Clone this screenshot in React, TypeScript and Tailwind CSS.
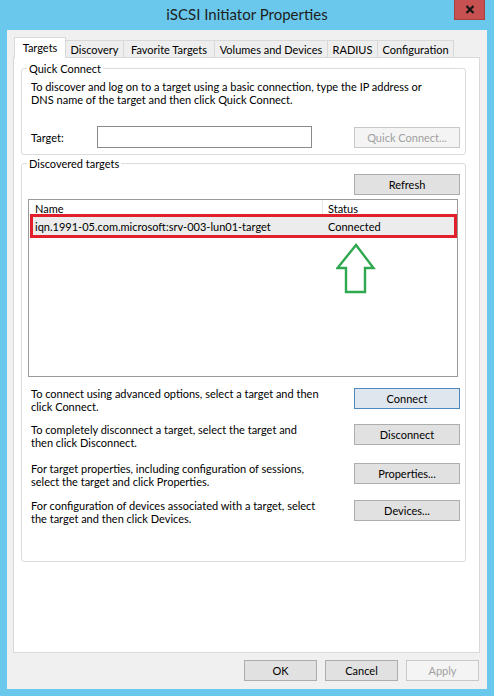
import type { ReactNode } from 'react';

type BtnProps = {
  children: ReactNode;
  disabled?: boolean;
  focused?: boolean;
  className?: string;
};

function Btn({ children, disabled = false, focused = false, className = '' }: BtnProps) {
  let look = 'border-[#adadad] bg-[#e1e1e1] text-black';
  if (disabled) look = 'border-[#c8c8c8] bg-[#f4f4f4] text-[#a0a0a0]';
  if (focused) look = 'border-[#4f88c0] bg-[#dfe6ed] text-black';
  return (
    <button
      type="button"
      className={`flex h-[21px] items-center justify-center border ${look} ${className}`}
    >
      {children}
    </button>
  );
}

const tabs = [
  { label: 'Targets', w: 'w-[52px]' },
  { label: 'Discovery', w: 'w-[59px]' },
  { label: 'Favorite Targets', w: 'w-[92px]' },
  { label: 'Volumes and Devices', w: 'w-[114px]' },
  { label: 'RADIUS', w: 'w-[51px]' },
  { label: 'Configuration', w: 'w-[77px]' },
];

const actions = [
  {
    lines: ['To connect using advanced options, select a target and then', 'click Connect.'],
    button: 'Connect',
    gap: 'mt-[10px]',
    focused: true,
  },
  {
    lines: ['To completely disconnect a target, select the target and', 'then click Disconnect.'],
    button: 'Disconnect',
    gap: 'mt-[10px]',
    focused: false,
  },
  {
    lines: ['For target properties, including configuration of sessions,', 'select the target and click Properties.'],
    button: 'Properties...',
    gap: 'mt-[13px]',
    focused: false,
  },
  {
    lines: ['For configuration of devices associated with a target, select', 'the target and then click Devices.'],
    button: 'Devices...',
    gap: 'mt-[11px]',
    focused: false,
  },
];

export default function App() {
  return (
    <div className="flex h-[696px] w-[494px] flex-col bg-[#69c8ec] font-['Lato',sans-serif] text-[11px] leading-[13px] text-black">
      {/* Title bar */}
      <div className="relative flex h-[30px] items-center justify-center">
        <span className="pb-[2px] text-[15px] leading-[18px] text-[#1e1e1e]">iSCSI Initiator Properties</span>
        <div className="absolute right-[9px] top-0 flex h-[20px] w-[31px] items-center justify-center border border-t-0 border-[#a8403f] bg-[#c75050]">
          <svg width="10" height="9" viewBox="0 0 10 9">
            <path d="M1.5 1 L8.5 8 M8.5 1 L1.5 8" stroke="#151515" strokeWidth="2.2" />
          </svg>
        </div>
      </div>

      {/* Dialog body */}
      <div className="mx-[7px] flex h-[659px] w-[480px] flex-col bg-[#f0f0f0] pl-[6px] pr-[7px] pt-[7px]">
        {/* Tabs */}
        <div className="relative z-10 -mb-px flex h-[21px] items-end pl-[1px]">
          {tabs.map((t, i) =>
            i === 0 ? (
              <div
                key={t.label}
                className={`relative z-10 flex h-[21px] ${t.w} items-start justify-center border border-b-0 border-[#d9d9d9] bg-white pt-[3px]`}
              >
                {t.label}
              </div>
            ) : (
              <div
                key={t.label}
                className={`-ml-px flex h-[18px] ${t.w} items-start justify-center border border-[#d9d9d9] bg-[#eeeeee] pt-[2px]`}
              >
                {t.label}
              </div>
            ),
          )}
        </div>

        {/* Tab panel */}
        <div className="flex h-[596px] flex-col border border-[#d9d9d9] bg-white pl-[7px] pr-[13px]">
          {/* Quick Connect */}
          <fieldset className="mt-[4px] rounded-[3px] border border-[#dcdcdc] pb-[6px] pl-[9px] pr-[5px]">
            <legend className="-ml-[4px] px-[2px]">Quick Connect</legend>
            <p className="mt-[5px]">
              To discover and log on to a target using a basic connection, type the IP address or
              <br />
              DNS name of the target and then click Quick Connect.
            </p>
            <div className="mt-[20px] flex items-center">
              <span className="w-[66px]">Target:</span>
              <div className="h-[22px] w-[215px] border border-[#8a8a8a] bg-white" />
              <Btn disabled className="ml-auto w-[106px]">
                Quick Connect...
              </Btn>
            </div>
          </fieldset>

          {/* Discovered targets */}
          <fieldset className="mt-[2px] rounded-[3px] border border-[#dcdcdc] pb-[36px] pl-[6px] pr-[5px]">
            <legend className="-ml-[1px] px-[2px]">Discovered targets</legend>
            <div className="mt-[4px] flex justify-end">
              <Btn className="w-[106px]">Refresh</Btn>
            </div>

            <div className="mt-[4px] h-[178px] w-[430px] border border-[#9a9a9a] bg-white">
              <div className="flex h-[14px] leading-[12px]">
                <div className="w-[294px] border-r border-[#e5e5e5] pl-[6px] pt-[3px]">Name</div>
                <div className="pl-[5px] pt-[3px]">Status</div>
              </div>
              <div className="ml-[1px] flex h-[24px] items-center border-[3px] border-[#e2202c] bg-[#ececec]">
                <div className="w-[295px] pl-[2px]">iqn.1991-05.com.microsoft:srv-003-lun01-target</div>
                <div>Connected</div>
              </div>
              <svg className="ml-[307px] mt-[5px]" width="40" height="52" viewBox="0 0 40 52">
                <path
                  d="M20 2 L1.5 25 L10 25 L10 49 L29 49 L29 25 L37.5 25 Z"
                  fill="none"
                  stroke="#2fa84f"
                  strokeWidth="2.4"
                  strokeLinejoin="miter"
                />
              </svg>
            </div>

            {actions.map((a) => (
              <div key={a.button} className={`${a.gap} flex items-start pl-[3px]`}>
                <p>
                  {a.lines[0]}
                  <br />
                  {a.lines[1]}
                </p>
                <Btn focused={a.focused} className="ml-auto mt-[1px] w-[106px]">
                  {a.button}
                </Btn>
              </div>
            ))}
          </fieldset>
        </div>

        {/* Dialog buttons */}
        <div className="mt-[7px] flex justify-end gap-[8px] pr-[1px]">
          <Btn className="w-[73px]">OK</Btn>
          <Btn className="w-[73px]">Cancel</Btn>
          <Btn disabled className="w-[73px]">
            Apply
          </Btn>
        </div>
      </div>
    </div>
  );
}
